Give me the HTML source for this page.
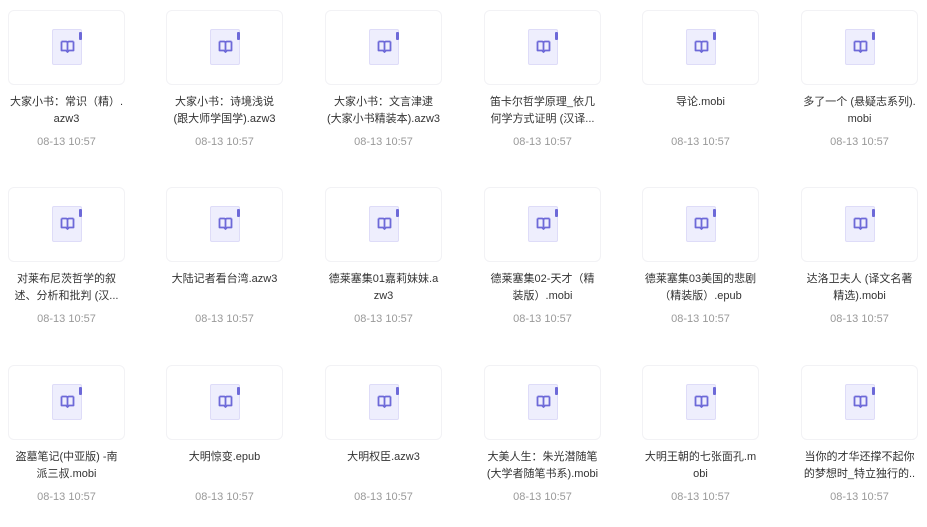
<!DOCTYPE html>
<html><head><meta charset="utf-8"><style>
*{margin:0;padding:0;box-sizing:border-box}
body{width:927px;height:527px;background:#fff;overflow:hidden;position:relative;font-family:"Liberation Sans","Noto Sans CJK SC",sans-serif}
.it{position:absolute;width:117px}
.card{position:absolute;left:0;top:0;width:117px;height:75px;border:1px solid #f2f2f5;border-radius:6px;background:#fff}
.doc{position:absolute;left:43px;top:18px;width:30px;height:36px;background:#eeeefd;border:1px solid #dedcf8;border-radius:2px}
.doc:after{content:"";position:absolute;right:-1px;top:2px;width:3px;height:8px;background:#6d69d8;border-radius:1px}
.doc svg{position:absolute;left:7px;top:10px}
.nm{position:absolute;top:84px;left:-10px;width:137px;text-align:center;font-size:11px;line-height:17px;color:#333}
.dt{position:absolute;top:125px;left:0;width:117px;text-align:center;font-size:11px;color:#999;line-height:14px}
</style></head><body>
<script>
const names=[
["大家小书：常识（精）.","azw3"],["大家小书：诗境浅说","(跟大师学国学).azw3"],["大家小书：文言津逮","(大家小书精装本).azw3"],["笛卡尔哲学原理_依几","何学方式证明 (汉译..."],["导论.mobi"],["多了一个 (悬疑志系列).","mobi"],
["对莱布尼茨哲学的叙","述、分析和批判 (汉..."],["大陆记者看台湾.azw3"],["德莱塞集01嘉莉妹妹.a","zw3"],["德莱塞集02-天才（精","装版）.mobi"],["德莱塞集03美国的悲剧","（精装版）.epub"],["达洛卫夫人 (译文名著","精选).mobi"],
["盗墓笔记(中亚版) -南","派三叔.mobi"],["大明惊变.epub"],["大明权臣.azw3"],["大美人生：朱光潜随笔","(大学者随笔书系).mobi"],["大明王朝的七张面孔.m","obi"],["当你的才华还撑不起你","的梦想时_特立独行的.."]];
const xs=[8,166,325,484,642,801],ys=[10,187,365];
let h="";
names.forEach((n,i)=>{const x=xs[i%6],y=ys[Math.floor(i/6)];
h+=`<div class="it" style="left:${x}px;top:${y}px"><div class="card"><div class="doc"><svg width="15" height="13" viewBox="0 0 15 13"><path d="M1.5 1.5h4.5a1.5 1.5 0 0 1 1.5 1.5v7.5M13.5 1.5H9A1.5 1.5 0 0 0 7.5 3M1.5 1.5v9h4.5l1.5 1.5 1.5-1.5h4.5v-9" fill="none" stroke="#6d69d8" stroke-width="1.8" stroke-linejoin="round"/></svg></div></div><div class="nm">${n.join("<br>")}</div><div class="dt">08-13 10:57</div></div>`;});
document.body.innerHTML=h;
</script>
</body></html>
